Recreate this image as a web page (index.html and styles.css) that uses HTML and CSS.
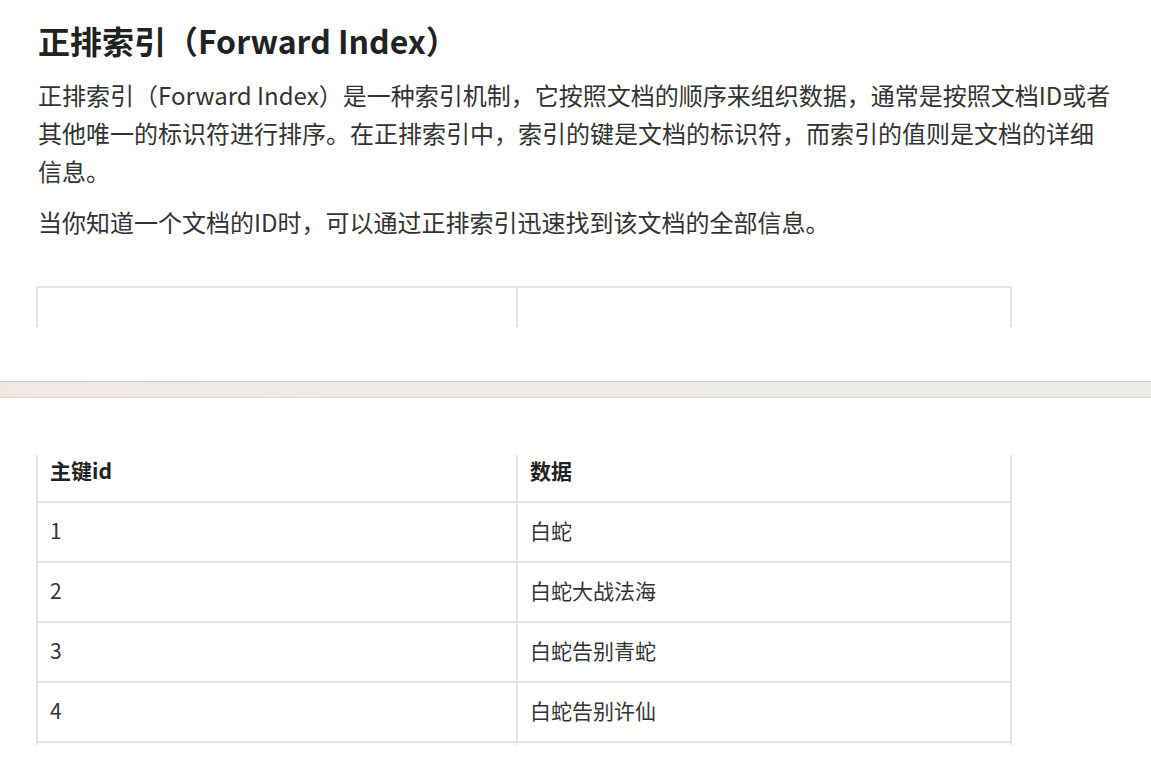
FILE: index.html
```html
<!DOCTYPE html>
<html lang="zh-CN">
<head>
<meta charset="utf-8">
<title>正排索引</title>
<link rel="stylesheet" href="styles.css">
</head>
<body>
<div class="sheet sheet-first">
  <h1 class="title">正排索引（Forward Index）</h1>
  <p class="para">正排索引（Forward Index）是一种索引机制，它按照文档的顺序来组织数据，通常是按照文档ID或者其他唯一的标识符进行排序。在正排索引中，索引的键是文档的标识符，而索引的值则是文档的详细信息。</p>
  <p class="para">当你知道一个文档的ID时，可以通过正排索引迅速找到该文档的全部信息。</p>
  <div class="table-head-frag">
    <div class="frag-cell"></div>
    <div class="frag-cell"></div>
  </div>
</div>
<div class="page-gap"></div>
<div class="sheet sheet-second">
  <table class="data-table">
    <thead>
      <tr><th>主键id</th><th>数据</th></tr>
    </thead>
    <tbody>
      <tr><td>1</td><td>白蛇</td></tr>
      <tr><td>2</td><td>白蛇大战法海</td></tr>
      <tr><td>3</td><td>白蛇告别青蛇</td></tr>
      <tr><td>4</td><td>白蛇告别许仙</td></tr>
      <tr class="tail-row"><td></td><td></td></tr>
    </tbody>
  </table>
</div>
</body>
</html>
```
FILE: styles.css
```css
html, body {
  margin: 0;
  padding: 0;
  background: #ffffff;
}
body {
  font-family: "Noto Sans CJK SC", "Noto Sans", sans-serif;
  color: #333333;
}
.sheet {
  padding: 0 0 0 36px;
}
.sheet-first {
  padding-top: 17px;
  height: 381px;
  box-sizing: border-box;
}
.title {
  margin: 0 0 0 2px;
  font-size: 32px;
  line-height: 46px;
  font-weight: 700;
  color: #222222;
}
.para {
  margin: 13px 0 0 2px;
  font-size: 24px;
  line-height: 38px;
  color: #333333;
  width: 1073px;
}
.table-head-frag {
  margin-top: 45px;
  width: 976px;
  height: 41px;
  box-sizing: border-box;
  display: grid;
  grid-template-columns: 478px 1fr;
  border-top: 2px solid #e3e3e8;
  border-left: 2px solid #e3e3e8;
  border-right: 2px solid #e3e3e8;
}
.frag-cell + .frag-cell {
  border-left: 2px solid #e3e3e8;
}
.page-gap {
  height: 15px;
  border-top: 1px solid #c9c8c5;
  border-bottom: 1px solid #d9d7d2;
  background: linear-gradient(to right, #f1e8e4 0%, #eeebe7 30%, #ecebe7 100%);
}
.sheet-second {
  padding-top: 57px;
}
.data-table {
  border-collapse: collapse;
  width: 976px;
  table-layout: fixed;
  font-size: 21px;
}
.data-table th,
.data-table td {
  border-left: 2px solid #e3e3e8;
  border-right: 2px solid #e3e3e8;
  border-bottom: 2px solid #e3e3e8;
  text-align: left;
  vertical-align: top;
  line-height: 29px;
  padding: 13px 0 16px 12px;
}
.data-table th:first-child,
.data-table td:first-child {
  width: 466px;
}
.data-table th {
  padding: 1px 0 16px 12px;
  font-weight: 700;
  color: #222222;
}
.data-table td {
  color: #333333;
}
.data-table .tail-row td {
  height: 2px;
  padding: 0;
  line-height: 0;
  border-bottom: none;
}
```
